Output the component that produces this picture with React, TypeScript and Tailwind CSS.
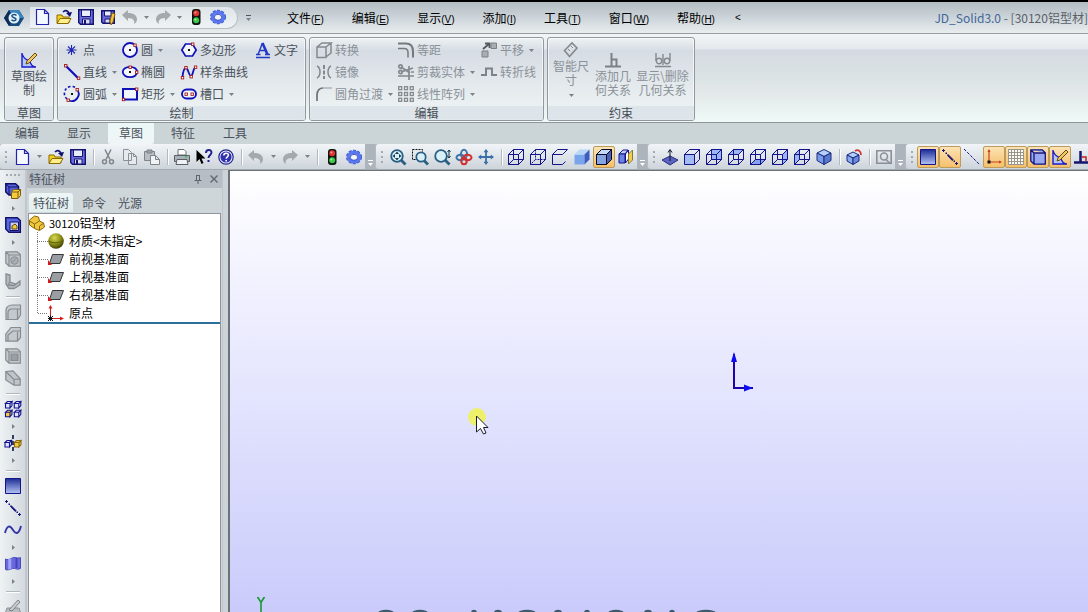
import type { ReactNode } from "react";

const NAVY = "#14148c";
const BLUE = "#1010b8";

type Faces = { front?: string; top?: string; side?: string; back?: string; bottom?: string; left?: string; wire?: boolean; dash?: boolean; stroke?: string };

function Cube({ front, top, side, back, bottom, left, wire = true, dash, stroke = NAVY }: Faces) {
  return (
    <g stroke={stroke} strokeWidth="1" fill="none">
      {back && <path d="M5.5 .5h10v10h-10z" fill={back} />}
      {bottom && <path d="M.5 15.5l5-5h10l-5 5z" fill={bottom} />}
      {left && <path d="M.5 5.5l5-5v10l-5 5z" fill={left} />}
      <path d="M.5 5.5h10v10h-10z" fill={front ?? "none"} />
      <path d="M.5 5.5l5-5h10l-5 5z" fill={top ?? "none"} />
      <path d="M10.5 5.5l5-5v10l-5 5z" fill={side ?? "none"} />
      {wire && <path d="M5.5 .5v10h10M5.5 10.5l-5 5" strokeDasharray={dash ? "2 1" : undefined} />}
    </g>
  );
}

function Mini({ x, y, fill, stroke = NAVY }: { x: number; y: number; fill: string; stroke?: string }) {
  return (
    <g transform={`translate(${x} ${y})`} fill={fill} stroke={stroke} strokeWidth="1.100">
      <path d="M.5 2.500h4.500v4.500h-4.500zM.5 2.500l2-2h4.500l-2 2zM7 .5v4l-2 2.500V2.500z" />
    </g>
  );
}

function Dots({ at }: { at: [number, number][] }) {
  return (
    <>
      {at.map(([x, y]) => (
        <rect key={`${x}-${y}`} x={x - 1} y={y - 1} width="2.400" height="2.400" fill="#fff" stroke="#a81818" strokeWidth=".9" />
      ))}
    </>
  );
}

const undoPath = "M0 6l6-5v3c6 0 9 2.500 9 6.500 0 2-1.500 4-3 4.500 1-3-.5-6-6-6v3z";

const lens = (inner: ReactNode) => (
  <>
    <path d="M11 11l4.500 4.500" stroke="#2a5f84" strokeWidth="2.800" />
    <circle cx="7" cy="7" r="5.800" fill="#d8f0f8" stroke="#2a5f84" strokeWidth="1.800" />
    {inner}
  </>
);

const icons: Record<string, ReactNode> = {
  new: <path d="M2.500 .5h8l4 4v11h-12zM10.500 .5v4h4" fill="#f4f8ff" stroke="#2424b0" strokeWidth="1.200" />,
  open: (
    <>
      <path d="M1 14V6h5l1 2h6v6z" fill="#f5d020" stroke="#8a6a00" />
      <path d="M1 14.500l3-5h11l-3 5z" fill="#ffef8a" stroke="#8a6a00" />
      <path d="M7 3c2-2 4-2 6 1" fill="none" stroke="#101070" strokeWidth="1.600" />
      <path d="M10 4l6-1-2 5z" fill="#101070" />
    </>
  ),
  save: (
    <>
      <path d="M.7 .7h14.600v14.600H2.500L.7 13.500z" fill="#6a6ae0" stroke="#14146e" strokeWidth="1.400" />
      <path d="M3.500 1h9v6.500h-9z" fill="#e8ecff" stroke="#14146e" />
      <path d="M4.500 10h7.500v5H4.500z" fill="#d8dcf4" stroke="#14146e" />
      <path d="M6 11h2v4H6z" fill="#14146e" />
    </>
  ),
  saveAs: (
    <>
      <path d="M1.700 1.700h12.600v12.600H3L1.700 13z" fill="#6a6ae0" stroke="#14146e" strokeWidth="1.400" />
      <path d="M4.500 2h6.500v5h-6.500z" fill="#e8ecff" stroke="#14146e" />
      <path d="M5 10h5v4H5z" fill="#d8dcf4" stroke="#14146e" />
      <path d="M12 4l-2 8 1 4 2-3 2-8z" fill="#f2c63c" stroke="#7a5200" strokeWidth=".8" />
    </>
  ),
  undo: <path d={undoPath} fill="#a4a9ae" />,
  redo: <path d={undoPath} fill="#a4a9ae" transform="matrix(-1 0 0 1 16 0)" />,
  traffic: (
    <>
      <rect x="4" y="0" width="8.500" height="16" rx="3" fill="#101410" />
      <circle cx="8.200" cy="4.300" r="3" fill="#e03434" />
      <circle cx="8.200" cy="11.300" r="3" fill="#38c848" />
      <circle cx="7.400" cy="3.500" r="1" fill="#ff9a8a" />
      <circle cx="7.400" cy="10.500" r="1" fill="#a8f0a8" />
    </>
  ),
  gear: (
    <>
      <ellipse cx="8" cy="8" rx="7.200" ry="6.500" fill="none" stroke="#3a54cc" strokeWidth="1.600" strokeDasharray="3 1.400" />
      <ellipse cx="8" cy="8" rx="5.400" ry="4.800" fill="#f2f6fa" stroke="#5a78ee" strokeWidth="3.400" />
      <ellipse cx="8" cy="8.300" rx="3.700" ry="3" fill="#f2f6fa" stroke="#2c44b8" strokeWidth=".9" />
    </>
  ),
  cut: (
    <g stroke="#80868c" fill="none" strokeWidth="1.500">
      <path d="M5 .5l5 10M11 .5l-5 10" />
      <circle cx="4.500" cy="12.800" r="2" />
      <circle cx="11.500" cy="12.800" r="2" />
    </g>
  ),
  copy: <path d="M1.500 .5h5l3 3v8h-8zM6.500 4.500h5l3 3v8h-8zM11.500 4.500v3h3" fill="#e6eaee" stroke="#8a9096" />,
  paste: (
    <g stroke="#7e848a">
      <path d="M.5 2.500h10v9H.5z" fill="#b8bec4" />
      <path d="M3 1h5v3H3z" fill="#9aa0a6" />
      <path d="M6.500 6.500h5l4 4v5h-9zM11.500 6.500v4h4" fill="#f0f2f4" />
    </g>
  ),
  print: (
    <>
      <path d="M4 6V.5h6l2 2V6z" fill="#fff" stroke="#6a7076" />
      <path d="M.5 6.500h15v6H.5z" fill="#a8b0b8" stroke="#5a6066" />
      <path d="M3 10.500h10l1 5H2z" fill="#eef2f4" stroke="#5a6066" />
      <path d="M11 8h2" stroke="#38c848" strokeWidth="1.500" />
    </>
  ),
  whats: (
    <>
      <path d="M.5 1v12l3-3 2 5 2-1-2-4.500h4z" fill="#000" />
      <path d="M10 4c0-4 5.500-4 5.500-.5 0 2.500-3 2.500-3 5.500" fill="none" stroke="#20208c" strokeWidth="1.900" />
      <path d="M11.500 11h2v2h-2z" fill="#20208c" />
    </>
  ),
  help: (
    <>
      <circle cx="8" cy="8" r="7.200" fill="#e8ecff" stroke="#22228c" strokeWidth="1.200" />
      <circle cx="8" cy="8" r="5.600" fill="#3232ac" />
      <path d="M5.800 6.500c0-3 4.600-3 4.600-.4C10.400 8 8.200 7.800 8.200 9.800" fill="none" stroke="#fff" strokeWidth="1.500" />
      <path d="M7.400 11h1.600v1.500H7.400z" fill="#fff" />
    </>
  ),
  zoomFit: lens(<path d="M7 2.500l2 2.500H5zM7 11.500L9 9H5zM2.500 7L5 5v4zM11.500 7L9 5v4z" fill="#163c54" />),
  zoomArea: (
    <>
      <path d="M.5 .5h10v10H.5z" fill="none" stroke="#111" strokeDasharray="2 1" />
      <path d="M12 11.500l4 4" stroke="#2a5f84" strokeWidth="2.800" />
      <circle cx="9" cy="8" r="4.700" fill="#d8f0f8" stroke="#2a5f84" strokeWidth="1.700" />
    </>
  ),
  zoomInOut: lens(<path d="M15 1v8M13.500 3L15 1l1.500 2M13.500 7L15 9l1.500-2" stroke="#16384c" fill="none" />),
  rotate: (
    <g fill="none" strokeWidth="2">
      <ellipse cx="8" cy="5" rx="3" ry="4.200" stroke="#3a74a8" />
      <ellipse cx="4.500" cy="8.500" rx="4" ry="2.700" stroke="#3a74a8" />
      <ellipse cx="11.500" cy="8.500" rx="4" ry="2.700" stroke="#d03030" />
      <ellipse cx="8" cy="12" rx="2.700" ry="3.200" stroke="#d03030" />
    </g>
  ),
  pan: (
    <path d="M8 0l2.500 3.200H8.900v3.900h3.900V5.500L16 8l-3.200 2.500V8.900H8.900v3.900h1.600L8 16l-2.500-3.200h1.600V8.900H3.200v1.600L0 8l3.200-2.500v1.600h3.900V3.200H5.500z" fill="#3a6ea8" />
  ),
  wire: <Cube />,
  hidden: <Cube dash />,
  noHidden: <path d="M.5 5.500h10M.5 5.500v10h10M.5 5.500l5-5h10l-5 5M10.500 15.500l3-3" fill="none" stroke={NAVY} />,
  shaded: <Cube wire={false} front="#7aa4ec" top="#b8d8fa" side="#3c5cc0" stroke="none" />,
  shadedEdge: <Cube wire={false} front="#86a4e0" top="#c4d8f8" side="#4a62b0" stroke="#080828" />,
  section: (
    <>
      <path d="M1 5l4-4h5l-3 4z" fill="#c0d0fa" stroke={NAVY} />
      <path d="M1 5h6v9H1z" fill="#6a84e0" stroke={NAVY} />
      <path d="M7.500 5l3-4v9l-3 4z" fill="#fff" stroke={NAVY} />
      <path d="M10.500 5l4-4v10l-4 4z" fill="#f2ce50" stroke="#8a7a30" />
    </>
  ),
  normal: (
    <>
      <path d="M0 11l8-4 8 4-8 5z" fill="#5a64c0" stroke="#28307c" />
      <path d="M8 12V1M6 3.500L8 .5l2 3" stroke="#101028" fill="none" />
    </>
  ),
  vFront: <Cube wire={false} front="#a4bcf6" />,
  vBack: <Cube back="#9ab4f4" />,
  vTop: <Cube top="#9ab4f4" />,
  vBottom: <Cube bottom="#86a2f0" />,
  vRight: <Cube side="#9ab4f4" />,
  vLeft: <Cube left="#9ab4f4" />,
  iso: (
    <g stroke="#1a2a80">
      <path d="M8 .5l7 3.500-7 3.500L1 4z" fill="#b4d0fa" />
      <path d="M1 4l7 3.500v8L1 11.500z" fill="#7a9ce8" />
      <path d="M15 4L8 7.500v8l7-4z" fill="#5878d0" />
    </g>
  ),
  isoRot: (
    <>
      <g stroke="#1a2a80">
        <path d="M7 3l6 3-6 3-6-3z" fill="#b4d0fa" />
        <path d="M1 6l6 3v6.500L1 12z" fill="#8aa8ee" />
        <path d="M13 6L7 9v6.500l6-3.500z" fill="#6a88dc" />
      </g>
      <path d="M9 2c3-2 6 0 6 4" fill="none" stroke="#d03838" strokeWidth="1.800" />
    </>
  ),
  viewBox: (
    <g fill="none" stroke="#8a9096" strokeWidth="1.600">
      <path d="M.8 1.800h14.400v12.400H.8z" />
      <circle cx="8" cy="7.500" r="3.500" />
      <path d="M10 10.500l4 4" />
    </g>
  ),
  plane: (
    <>
      <defs>
        <linearGradient id="planeFill" x1="0" y1="0" x2="0" y2="1">
          <stop offset="0" stopColor="#1c2c94" />
          <stop offset="1" stopColor="#b4c4f4" />
        </linearGradient>
      </defs>
      <path d="M.5 .5h15v15H.5z" fill="url(#planeFill)" stroke={NAVY} />
    </>
  ),
  axis: (
    <g fill="#14147c">
      <path d="M0 1h3v1H0zM1 0h1v3H1zM13 14h3v1h-3zM14 13h1v3h-1z" />
      <path d="M3.500 3.500h1.500v1.500H3.500zM11.500 11.500H13V13h-1.500z" />
      <path d="M6 5.500L11 10.500 10.300 11.500 5.500 6.500z" stroke="#14147c" />
    </g>
  ),
  axisThin: <path d="M0 0l16 16" stroke={NAVY} strokeDasharray="3 1.500" />,
  origin: (
    <>
      <path d="M3 1v12h12" fill="none" stroke="#c8401c" strokeWidth="1.200" />
      <path d="M1.500 3L3 0l1.500 3zM13 11.500l3 1.500-3 1.500z" fill="#c8401c" />
      <path d="M1.500 11.500h3v3h-3z" fill="#111" />
    </>
  ),
  grid: (
    <>
      <path d="M.5 .5h15v15H.5z" fill="#fffdf6" />
      <path d="M.5 .5v15M3.500 .5v15M6.500 .5v15M9.500 .5v15M12.500 .5v15M15.500 .5v15M.5 .5h15M.5 3.500h15M.5 6.500h15M.5 9.500h15M.5 12.500h15M.5 15.500h15" stroke="#9a958a" fill="none" />
    </>
  ),
  cubeBlue: <path d="M.8 .8h11.500l3 3v11.400H4L.8 12zM.8 .8L4 4h11.200M4 4v11" fill="#9aa8f0" stroke="#14147c" strokeWidth="1.300" />,
  sketch: (
    <>
      <path d="M1 1v14h14c-6 0-4-4-7-6s-6-2-7-8z" fill="#b4c8f8" stroke="#1c1ccc" strokeWidth="1.400" />
      <path d="M5 12l1-3 8-8 2 2-8 8z" fill="#f0c860" stroke="#6a4a10" />
    </>
  ),
  perp: (
    <>
      <path d="M6.500 2v12M0 13.500h16" stroke="#14146e" strokeWidth="2.500" />
      <path d="M8 8h4v4" fill="none" stroke="#c02020" strokeWidth="1.500" />
    </>
  ),
  point: <path d="M7.500 3v10M2.500 8h10M4 4.500l7 7M11 4.500l-7 7" stroke="#2028b4" strokeWidth="1.100" />,
  line: (
    <>
      <path d="M2 2l12 12" stroke={BLUE} strokeWidth="2.200" />
      <Dots at={[[1.500, 1.500], [14.400, 14]]} />
    </>
  ),
  arc: (
    <>
      <path d="M13 3.500a7 7 0 0 1-8 11" fill="none" stroke={BLUE} strokeWidth="1.800" />
      <path d="M3 13a7 7 0 0 1 9-11" fill="none" stroke={BLUE} strokeWidth="1.600" strokeDasharray="2.500 2" />
      <path d="M7 7h2v2H7z" fill="#111" />
      <Dots at={[[13, 3.500], [4, 14]]} />
    </>
  ),
  circle: (
    <>
      <circle cx="8" cy="8" r="7" fill="#f4f8fc" stroke={BLUE} strokeWidth="1.800" />
      <path d="M7 7h2v2H7z" fill="#111" />
      <Dots at={[[12.800, 3]]} />
    </>
  ),
  ellipse: (
    <>
      <ellipse cx="8" cy="8" rx="7.200" ry="5.200" fill="#f4f8fc" stroke={BLUE} strokeWidth="1.800" />
      <path d="M7 7h2v2H7z" fill="#111" />
      <Dots at={[[8, 3], [14.500, 8]]} />
    </>
  ),
  rect: (
    <>
      <path d="M1 3h14v10.500H1z" fill="#f0f6fc" stroke={BLUE} strokeWidth="2" />
      <Dots at={[[1.300, 13.300], [14.500, 3]]} />
    </>
  ),
  poly: (
    <>
      <path d="M4.500 2h7l3.700 6-3.700 6h-7L.8 8z" fill="#f0f6fc" stroke={BLUE} strokeWidth="1.700" />
      <path d="M7 7h2v2H7z" fill="#111" />
      <Dots at={[[11.500, 2]]} />
    </>
  ),
  spline: (
    <>
      <path d="M1.500 13C2 8 3 4 5 4s3 8 5 8 2-8 4.500-8.500" fill="none" stroke={BLUE} strokeWidth="1.800" />
      <Dots at={[[1.300, 13.500], [4.800, 3.500], [10, 12.500], [14.400, 3]]} />
    </>
  ),
  slot: (
    <>
      <rect x="1" y="3.500" width="14" height="9" rx="4.500" fill="#f0f6fc" stroke={BLUE} strokeWidth="1.900" />
      <Dots at={[[5, 8], [11, 8]]} />
    </>
  ),
  text: (
    <g fill="none" stroke="#2038c8">
      <path d="M3 12.500L7.500 1" strokeWidth="1.400" />
      <path d="M7.500 1L12.500 12.500" strokeWidth="2.600" />
      <path d="M5 8.500h6M1 12.500h4.500M10 12.500h5M1 15.500h14" strokeWidth="1.400" />
    </g>
  ),
  convert: (
    <g fill="none" stroke="#84898e" strokeWidth="1.500">
      <path d="M1 5h9v10.500H1zM1 5l5-4h9l-5 4M15 1v10l-5 4" />
    </g>
  ),
  mirror: (
    <g fill="none" stroke="#84898e" strokeWidth="1.500">
      <path d="M1 2c4 2 4 10 0 12M15 2c-4 2-4 10 0 12" />
      <path d="M8 1v14" strokeDasharray="4 1.500" stroke="#64696e" />
    </g>
  ),
  fillet: (
    <g fill="none" stroke="#6e7378">
      <path d="M1 15V9c0-5 3-7 6-7" strokeWidth="1.700" />
      <path d="M7 2h9" strokeWidth="1.200" stroke="#a0a5aa" />
    </g>
  ),
  offset: (
    <g fill="none" stroke="#74797e">
      <path d="M0 1.500h8c5 0 7 3 7 8v6" strokeWidth="2" />
      <path d="M0 6.500h6c3 0 4 2 4 4v5" strokeWidth="1.500" />
    </g>
  ),
  trim: (
    <g fill="none" stroke="#84898e" strokeWidth="1.700">
      <path d="M0 12h16M11 2v14M3 3l9 6M3 8l12-4M13 8h3" />
      <circle cx="2.500" cy="2.500" r="1.700" />
      <circle cx="2.500" cy="8" r="1.700" />
    </g>
  ),
  pattern: (
    <g fill="none" stroke="#84898e" strokeWidth="1.300">
      {[0.7, 6.5, 12.3].map((y) => [0.7, 6.5, 12.3].map((x) => <rect key={`${x}-${y}`} x={x} y={y} width="3" height="3" />))}
    </g>
  ),
  move: (
    <>
      <path d="M1 9h6v6H1zM10 1h5.500v5.500H10z" fill="#a8adb2" stroke="#7c8187" />
      <path d="M2 7l6-5M4 1.500h4.500V6" fill="none" stroke="#54595e" strokeWidth="1.800" />
    </>
  ),
  jog: <path d="M0 11h5V4.500h6V11h5" fill="none" stroke="#7c8187" strokeWidth="1.900" />,
  dimension: (
    <g fill="none" stroke="#84898e" strokeWidth="1.600">
      <path d="M1.500 8.500L9 1l5 5-7.500 8.500z" />
      <path d="M5 7l2 2M8 4l2 2" strokeWidth="1" />
    </g>
  ),
  addRel: <path d="M6.500 1v13M0 14.500h16M7 7.500h4.500V14" fill="none" stroke="#7c8187" strokeWidth="2" />,
  showRel: (
    <g fill="none" stroke="#84898e" strokeWidth="1.400">
      <path d="M1 1v8M15 1v8M8 2v11M0 14.500h16" />
      <circle cx="4" cy="9" r="2.700" />
      <circle cx="12" cy="9" r="2.700" />
    </g>
  ),
  extrude: (
    <>
      <path d="M.8 .8h9.700l3 2.700v8.500H4L.8 9z" fill="#5464d8" stroke="#10106a" strokeWidth="1.500" />
      <path d="M.8 .8L4 4h9.500M4 4v8" stroke="#10106a" fill="none" />
      <path d="M6.500 9l2-2.500h7v6l-2.500 3H6.500zM6.500 9H13v6M13 9l2.500-2.500" fill="#f4cc3c" stroke="#7a5c10" />
    </>
  ),
  cutout: (
    <>
      <path d="M.8 .8h11.500l3 2.700v11.700H4L.8 12z" fill="#5868e0" stroke="#10106a" strokeWidth="1.500" />
      <path d="M5 5h8.500v8.500H5z" fill="#c8d0fa" stroke="#10106a" />
      <path d="M7 9l3-2 2 2v3H7z" fill="#f4cc3c" stroke="#5c4808" />
    </>
  ),
  hole: (
    <g stroke="#868c92" fill="#c2c7cb">
      <path d="M.8 .8h11.500l3 2.700v11.700H4L.8 12zM4 4h11M4 4v11M.8 .8L4 4" strokeWidth="1.200" />
      <circle cx="9.500" cy="9.500" r="3.800" fill="#a9afb5" />
      <path d="M7 11.500l4-4" />
    </g>
  ),
  rib: <path d="M1 1l4 1v7l6 2 4-3v4l-6 3.500H4L1 11zM5 9l-2 3M11 11l-2 1.500L3 12" fill="#b4b9be" stroke="#868c92" strokeWidth="1.300" />,
  round: <path d="M1 15.500V6c0-3 3-5 6-5h8.500v10l-3 4.500zM12.500 15.500V5.500M3 15.500V9c0-3 2-4 4-4h8" fill="#c4c9cd" stroke="#868c92" strokeWidth="1.200" />,
  chamfer: <path d="M.8 15.200V8L6 1.500h9.500v10l-3 3.700zM3 15V9l5-4h7M12.500 6v9" fill="#c4c9cd" stroke="#868c92" strokeWidth="1.200" />,
  shell: (
    <g fill="#c6cbcf" stroke="#868c92" strokeWidth="1.200">
      <path d="M.8 .8h11.500l3 2.700v11.700H4L.8 12z" />
      <path d="M.8 .8L4 4h11M4 4v11" fill="none" />
      <path d="M6 6h7v6.500H6z" fill="#989ea4" />
    </g>
  ),
  draft: <path d="M.8 1.500L8 .8l7.200 8v6.400H9L.8 10zM.8 1.500L9 9.500v5.500M9 9.500l6-.7" fill="#bfc4c8" stroke="#868c92" strokeWidth="1.200" />,
  array: (
    <>
      <Mini x={0} y={0} fill="#dce4ff" />
      <Mini x={8.8} y={0} fill="#dce4ff" />
      <Mini x={0} y={8.8} fill="#f2cc40" />
      <Mini x={8.8} y={8.8} fill="#dce4ff" />
    </>
  ),
  mirrorBody: (
    <>
      <path d="M8 0v16" stroke="#101040" strokeWidth="1.600" strokeDasharray="4 2" />
      <Mini x={-0.5} y={5} fill="#dce4ff" />
      <Mini x={9} y={5} fill="#f2cc40" stroke="#8a6a10" />
    </>
  ),
  curve: <path d="M0 11c2-8 5-8 8-3s6 4 8-4" fill="none" stroke="#3434a8" strokeWidth="1.900" />,
  surface: (
    <>
      <path d="M.5 3c4 2 6-2 10-1.500 2 .5 3 1 5 0v11c-4 2-5-1-8 0s-5 2-7 1z" fill="#6a6ae0" stroke="#4a4ac0" />
      <path d="M4 3v10.500M5.500 2.700V13" stroke="#a4a4f4" strokeWidth="1.500" />
      <path d="M11.500 2v10" stroke="#4444b4" strokeWidth="2" />
    </>
  ),
  sketch3d: (
    <>
      <path d="M2 9h12l2 6H0z" fill="#b8bdc2" stroke="#8a9096" />
      <path d="M4 11l9-10 2 2-8 9z" fill="#c8ccd0" stroke="#7c8288" />
    </>
  ),
  part: (
    <g stroke="#8a6808" fill="#f0c840">
      <path d="M.5 5l5-4 4 1 1 4 4 2 1 4-5 3.500-5-2-5-3.500z" />
      <path d="M.5 6l5 3 5-3M5.500 9v4M10.500 15V11l4.500-3" fill="none" />
    </g>
  ),
  material: (
    <>
      <defs>
        <radialGradient id="ball" cx=".4" cy=".3" r=".7">
          <stop offset="0" stopColor="#d4d850" />
          <stop offset=".6" stopColor="#8a8c14" />
          <stop offset="1" stopColor="#3e4004" />
        </radialGradient>
      </defs>
      <circle cx="8" cy="8" r="7.800" fill="url(#ball)" />
      <path d="M.5 8c4 2.500 11 2.500 15-1" stroke="#5c5e0c" fill="none" />
    </>
  ),
  datum: (
    <>
      <path d="M4.500 3.500h11l-3.500 9H1.500z" fill="#9a9ea2" stroke="#34383c" />
      <path d="M0 14V9l4 5z" fill="#d81818" />
    </>
  ),
  treeOrigin: (
    <>
      <path d="M2.500 14V1M2.500 13.500H15" stroke="#d02020" strokeWidth="1.100" fill="none" />
      <path d="M.5 3.500L2.500 0l2 3.500zM12 11.500l4 2-4 2z" fill="#d02020" />
      <path d="M0 11l5 5M5 11l-5 5M2.500 10.500v5.500M0 13.500h5" stroke="#111" />
    </>
  ),
};

function Icon({ name }: { name: string }) {
  return (
    <svg viewBox="0 0 16 16" className="block size-4 shrink-0 overflow-visible" aria-hidden="true">
      {icons[name]}
    </svg>
  );
}

function Caret() {
  return (
    <svg viewBox="0 0 5 3" className="h-[3px] w-[5px] shrink-0" aria-hidden="true">
      <path d="M0 0h5L2.500 3z" fill="#7c8288" />
    </svg>
  );
}

const menus = [
  ["文件", "F"],
  ["编辑", "E"],
  ["显示", "V"],
  ["添加", "I"],
  ["工具", "T"],
  ["窗口", "W"],
  ["帮助", "H"],
];

function TitleBar() {
  return (
    <header className="flex h-8 shrink-0 items-center border-b border-[#979c9f] bg-gradient-to-b from-[#b3bcc2] via-[#ccd4d9] to-[#e9edef]">
      <svg viewBox="0 0 20 20" className="ml-1 size-5 shrink-0" aria-hidden="true">
        <path d="M5 2h10l5 8-5 8H5l-5-8z" fill="#164a80" />
        <path d="M5 2h10l5 8H9z" fill="#3a86bc" />
        <path d="M0 10l5-8 4 8-4 8z" fill="#0e2c58" />
        <circle cx="10" cy="10" r="5.500" fill="#e4f0f8" />
        <path d="M12.500 7.500c-2-1.800-5-.8-4.500.8s4 1.200 4 3-3 2-4.500.5" fill="none" stroke="#1c5488" strokeWidth="1.500" />
      </svg>
      <div className="ml-[6px] flex h-[22px] items-center rounded-tl-[10px] rounded-r-full border-r border-b border-[#b8c0c6] bg-gradient-to-b from-[#dfe5e9] to-[#eff3f5] pr-2 pl-px">
        {["new", "open", "save", "saveAs", "undo", "v1", "redo", "v2", "traffic", "gear"].map((n) =>
          n.startsWith("v") ? (
            <button key={n} aria-label="更多" className="flex w-[11px] justify-center">
              <Caret />
            </button>
          ) : (
            <button key={n} aria-label={n} className="flex w-[22px] justify-center">
              <Icon name={n} />
            </button>
          ),
        )}
      </div>
      <button aria-label="自定义" className="ml-1 flex w-3 flex-col items-center gap-[2px]">
        <span className="h-px w-[5px] bg-[#50565c]" />
        <Caret />
      </button>
      <nav className="ml-[33px] flex shrink-0 items-center gap-7 text-[12px] text-black">
        {menus.map(([label, key]) => (
          <button key={key} className="whitespace-nowrap">
            {label}
            <span className="font-['Liberation_Sans',sans-serif] text-[10px]">
              (<u>{key}</u>)
            </span>
          </button>
        ))}
        <button className="-ml-2 font-['Liberation_Sans',sans-serif] text-[10px]">&lt;</button>
      </nav>
      <h1 className="ml-auto text-[12px] whitespace-nowrap text-[#5a6068]">
        <span className="text-[#41679a]">JD_Solid3.0</span> - [30120铝型材]
      </h1>
    </header>
  );
}

type Cmd = { icon: string; label: string; more?: boolean };

function Tool({ icon, label, more }: Cmd) {
  return (
    <button className="flex h-[22px] items-center gap-[3px] whitespace-nowrap">
      <Icon name={icon} />
      {label}
      {more && (
        <span className="ml-[2px] flex">
          <Caret />
        </span>
      )}
    </button>
  );
}

function BigTool({ icon, label, wide, more }: { icon: string; label: string; wide?: boolean; more?: boolean }) {
  return (
    <button className="flex flex-col items-center">
      <Icon name={icon} />
      <span className={wide ? "mt-px w-[53px] text-center leading-[14px] break-all" : "mt-px w-9 text-center leading-[14px] break-all"}>{label}</span>
      {more && (
        <span className="mt-[7px] flex">
          <Caret />
        </span>
      )}
    </button>
  );
}

function Group({ title, children }: { title: string; children: ReactNode }) {
  return (
    <section className="flex flex-col rounded-[3px] border border-[#92989e] bg-gradient-to-b from-[#eef2f4] from-0% via-[#d6dce3] via-16% to-[#ebf1f2] to-80% shadow-[inset_0_0_0_1px_rgba(255,255,255,0.6)]">
      <div className="flex h-[68px] items-start">{children}</div>
      <h2 className="flex h-[14px] items-center justify-center bg-[#d9dfe7]/70 text-[12px] leading-[14px] text-[#454c55]">{title}</h2>
    </section>
  );
}

const draw: Cmd[] = [
  { icon: "point", label: "点" },
  { icon: "circle", label: "圆", more: true },
  { icon: "poly", label: "多边形" },
  { icon: "text", label: "文字" },
  { icon: "line", label: "直线", more: true },
  { icon: "ellipse", label: "椭圆" },
  { icon: "spline", label: "样条曲线" },
  { icon: "", label: "" },
  { icon: "arc", label: "圆弧", more: true },
  { icon: "rect", label: "矩形", more: true },
  { icon: "slot", label: "槽口", more: true },
];

const edit: Cmd[] = [
  { icon: "convert", label: "转换" },
  { icon: "offset", label: "等距" },
  { icon: "move", label: "平移", more: true },
  { icon: "mirror", label: "镜像" },
  { icon: "trim", label: "剪裁实体", more: true },
  { icon: "jog", label: "转折线" },
  { icon: "fillet", label: "圆角过渡", more: true },
  { icon: "pattern", label: "线性阵列", more: true },
];

function Ribbon() {
  return (
    <div className="flex shrink-0 items-start gap-[3px] border-b border-[#8f9599] bg-[linear-gradient(to_bottom,#f1f5f7,#e5e9ed_17%,#d5dae2_18%,#d9e0e3_40%,#e4eaea_70%,#effbf9)] px-1 pt-[3px] pb-px text-[12px] leading-4 text-[#4b525c]">
      <Group title="草图">
        <div className="px-[6px] pt-[14px]">
          <BigTool icon="sketch" label="草图绘制" />
        </div>
      </Group>
      <Group title="绘制">
        <div className="grid grid-cols-[58px_59px_74px_50px] pt-px pl-[6px]">
          {draw.map((c, i) => (c.label ? <Tool key={c.label} {...c} /> : <span key={i} />))}
        </div>
      </Group>
      <Group title="编辑">
        <div className="grid grid-cols-[82px_83px_62px] pt-px pl-[6px] text-[#8b9198]">
          {edit.map((c) => (
            <Tool key={c.label} {...c} />
          ))}
        </div>
      </Group>
      <Group title="约束">
        <div className="flex items-start gap-[6px] px-[5px] pt-1 text-[#8b9198]">
          <BigTool icon="dimension" label="智能尺寸" more />
          <div className="flex gap-[5px] pt-[10px]">
            <BigTool icon="addRel" label="添加几何关系" />
            <BigTool icon="showRel" label="显示\删除几何关系" wide />
          </div>
        </div>
      </Group>
    </div>
  );
}

function RibbonTabs() {
  return (
    <nav className="flex h-[21px] shrink-0 items-start gap-[6px] bg-[#cbd4d7] pl-1 text-[12px] text-[#4b525c]">
      {["编辑", "显示", "草图", "特征", "工具"].map((t) => (
        <button
          key={t}
          className={
            t === "草图"
              ? "h-full rounded-b-[2px] bg-gradient-to-b from-[#ebf8f7] to-[#f0f5f7] px-[11px] pb-[2px] leading-[18px]"
              : "h-full px-[11px] pb-[2px] leading-[18px]"
          }
        >
          {t}
        </button>
      ))}
    </nav>
  );
}

function Strip({ items }: { items: string[] }) {
  return (
    <div role="toolbar" className="flex h-full shrink-0 items-center rounded-l-[3px] bg-gradient-to-b from-[#f1f5f8] to-[#cdd4da]">
      <span className="flex w-[11px] flex-col items-center gap-[3px]">
        {[0, 1, 2].map((i) => (
          <i key={i} className="size-[2px] bg-[#a2a9b0]" />
        ))}
      </span>
      {items.map((raw, i) => {
        if (raw === "|")
          return (
            <span key={i} className="flex w-2 justify-center">
              <i className="h-4 w-px bg-[#b2b9c0] shadow-[1px_0_#fff]" />
            </span>
          );
        if (raw === "v")
          return (
            <button key={i} aria-label="更多" className="flex w-3 justify-center">
              <Caret />
            </button>
          );
        if (raw === "end")
          return (
            <button key={i} aria-label="工具栏选项" className="flex h-full w-[10px] flex-col items-center justify-end gap-[2px] bg-[#aeb4bb] pb-[3px]">
              <i className="h-px w-[5px] bg-white" />
              <svg viewBox="0 0 5 3" className="h-[3px] w-[5px]">
                <path d="M0 0h5L2.500 3z" fill="#fff" />
              </svg>
            </button>
          );
        const on = raw.startsWith("*");
        const name = on ? raw.slice(1) : raw;
        return (
          <button
            key={i}
            aria-label={name}
            aria-pressed={on}
            className={
              on
                ? "flex size-[22px] items-center justify-center rounded-[2px] border border-[#bd9b5c] bg-gradient-to-b from-[#fbe3b4] to-[#f6c069]"
                : "flex size-[22px] items-center justify-center"
            }
          >
            <Icon name={name} />
          </button>
        );
      })}
    </div>
  );
}

const strips = [
  ["new", "v", "open", "save", "|", "cut", "copy", "paste", "|", "print", "whats", "help", "|", "undo", "v", "redo", "v", "|", "traffic", "gear", "end"],
  ["zoomFit", "zoomArea", "zoomInOut", "rotate", "pan", "|", "wire", "hidden", "noHidden", "shaded", "*shadedEdge", "section", "end"],
  ["normal", "vFront", "vBack", "vTop", "vBottom", "vRight", "vLeft", "iso", "|", "isoRot", "|", "viewBox", "end"],
  ["*plane", "*axis", "axisThin", "*origin", "*grid", "*cubeBlue", "*sketch", "perp"],
];

const side = [
  "extrude", ">", "cutout", ">", "hole", "rib", "-", "round", "chamfer", "shell", "draft", "-",
  "array", ">", "mirrorBody", ">", "-", "plane", "axis", "curve", ">", "surface", ">", "-", "sketch3d",
];

function SideBar() {
  return (
    <div role="toolbar" className="flex w-[26px] shrink-0 flex-col items-center overflow-hidden border-r border-[#c2c8ce] bg-gradient-to-r from-[#eef2f4] to-[#d3d9de] pl-px">
      <span className="flex h-[10px] shrink-0 items-center gap-[2px]">
        {[0, 1, 2, 3].map((i) => (
          <i key={i} className="size-[2px] bg-[#a2a9b0]" />
        ))}
      </span>
      {side.map((n, i) => {
        if (n === "-")
          return (
            <span key={i} className="flex h-[9px] shrink-0 items-center">
              <i className="h-px w-[14px] bg-[#b0b7bd] shadow-[0_1px_#fff]" />
            </span>
          );
        if (n === ">")
          return (
            <button key={i} aria-label="展开" className="flex h-3 shrink-0 items-center">
              <svg viewBox="0 0 3 5" className="h-[5px] w-[3px]">
                <path d="M0 0v5l3-2.500z" fill="#7c8288" />
              </svg>
            </button>
          );
        return (
          <button key={i} aria-label={n} className="flex size-[22px] shrink-0 items-center justify-center">
            <Icon name={n} />
          </button>
        );
      })}
    </div>
  );
}

const nodes = [
  ["material", "材质<未指定>"],
  ["datum", "前视基准面"],
  ["datum", "上视基准面"],
  ["datum", "右视基准面"],
  ["treeOrigin", "原点"],
];

function FeaturePanel() {
  return (
    <aside className="flex w-[197px] shrink-0 flex-col border-x border-[#c0c6cc] bg-[#cfd6da] text-[12px] text-[#4b525c]">
      <div className="flex h-[18px] shrink-0 items-center bg-[#b7bdc5] pr-1 pl-[2px]">
        <h2>特征树</h2>
        <button aria-label="固定" className="ml-auto">
          <svg viewBox="0 0 8 9" className="h-[9px] w-2" fill="none" stroke="#5e656c">
            <path d="M2 .5h4M2.500 .5v5M5.500 .5v5M.5 5.500h7M4 5.500V9" />
          </svg>
        </button>
        <button aria-label="关闭" className="ml-2">
          <svg viewBox="0 0 8 8" className="size-2" fill="none" stroke="#5e656c" strokeWidth="1.300">
            <path d="M.5 .5l7 7M7.500 .5l-7 7" />
          </svg>
        </button>
      </div>
      <div className="mt-[5px] flex h-[19px] shrink-0 items-center gap-3 pl-[2px]">
        <button className="h-full rounded-t-[3px] bg-gradient-to-b from-[#eef6f6] to-[#e2eeee] px-1 leading-4">特征树</button>
        <button className="-ml-[3px] h-full leading-4">命令</button>
        <button className="h-full leading-4">光源</button>
      </div>
      <div className="mx-px mt-px flex-1 overflow-hidden border border-b-0 border-[#8e959c] bg-white text-black">
        <div className="border-b-2 border-[#2d6f9c]">
          <div className="flex h-[18px] items-center gap-1">
            <Icon name="part" />
            <span>
              <span className="text-[11px]">30120</span>铝型材
            </span>
          </div>
          <ul>
            {nodes.map(([icon, label], i) => (
              <li key={label} className="flex h-[18px] items-center pl-2">
                <svg viewBox="0 0 11 18" className="h-[18px] w-[11px]" fill="none" stroke="#7a7a7a" strokeDasharray="1 1">
                  <path d={i === nodes.length - 1 ? "M.5 0v9.500H11" : "M.5 0v18M0 9.500h11"} />
                </svg>
                <Icon name={icon} />
                <span className="ml-[5px]">{label}</span>
              </li>
            ))}
          </ul>
        </div>
      </div>
    </aside>
  );
}

const captionTops = [
  [386, 8], [420, 8], [474, 3], [498, 4], [527, 9], [558, 4], [587, 3], [616, 8], [648, 4], [672, 3], [706, 10],
];

function Viewport() {
  return (
    <main className="relative ml-[5px] min-w-0 flex-1 overflow-hidden border-t border-l-2 border-[#6c7278] bg-gradient-to-b from-white to-[#cacbfb]">
      <svg className="absolute top-[181px] left-[499px] h-10 w-7" viewBox="0 0 28 40" aria-hidden="true">
        <path d="M5 2v34h19" fill="none" stroke="#2000a8" strokeWidth="2" />
        <path d="M5 0l3 10H2zM24 36l-9-3.500v7z" fill="#0c0cf0" />
      </svg>
      <svg className="absolute top-[234px] left-[237px] h-8 w-7" viewBox="0 0 28 32" aria-hidden="true">
        <circle cx="10" cy="12" r="9" fill="#eef06c" />
        <path d="M9.500 11v16l4-3.500 3 5.500 2.500-1-2.500-5.500h4.500z" fill="#fff" stroke="#1c1c28" />
      </svg>
      <svg viewBox="0 0 8 15" className="absolute bottom-0 left-[27px] h-[15px] w-2" fill="none" aria-hidden="true">
        <path d="M0 .5h1l3 5 3-5h1M4 5v10" stroke="#189a30" strokeWidth="1.600" />
      </svg>
      <svg className="absolute bottom-0 left-0 h-[3px] w-[500px]" viewBox="230 0 500 3" aria-hidden="true">
        {captionTops.map(([x, r]) => (
          <ellipse key={x} cx={x} cy="4" rx={r} ry="3.200" fill="#3c5c6c" />
        ))}
      </svg>
    </main>
  );
}

export default function App() {
  return (
    <div className="flex h-screen flex-col overflow-hidden border-t-2 border-black bg-[#ccd4da] font-['Noto_Sans_CJK_SC',sans-serif]">
      <TitleBar />
      <Ribbon />
      <RibbonTabs />
      <div className="flex h-[26px] shrink-0 gap-px overflow-hidden border-b border-[#a4aab0] bg-[#b4bac1]">
        {strips.map((s, i) => (
          <Strip key={i} items={s} />
        ))}
        <span className="-ml-px flex-1 bg-gradient-to-b from-[#f1f5f8] to-[#cdd4da]" />
      </div>
      <div className="flex min-h-0 flex-1">
        <SideBar />
        <FeaturePanel />
        <Viewport />
      </div>
    </div>
  );
}
